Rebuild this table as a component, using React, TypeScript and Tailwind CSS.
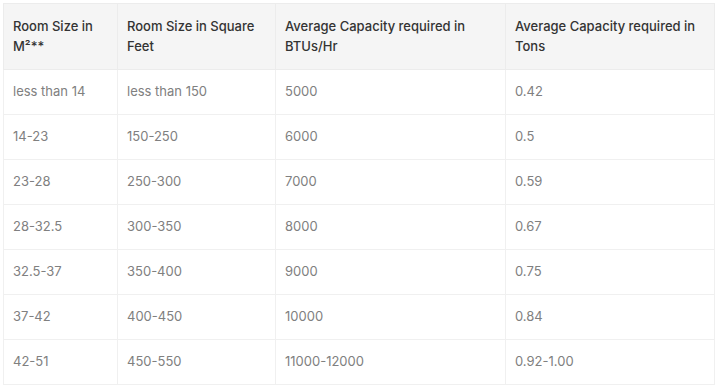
const headers = [
  "Room Size in M²**",
  "Room Size in Square Feet",
  "Average Capacity required in BTUs/Hr",
  "Average Capacity required in Tons",
];

const rows = [
  ["less than 14", "less than 150", "5000", "0.42"],
  ["14-23", "150-250", "6000", "0.5"],
  ["23-28", "250-300", "7000", "0.59"],
  ["28-32.5", "300-350", "8000", "0.67"],
  ["32.5-37", "350-400", "9000", "0.75"],
  ["37-42", "400-450", "10000", "0.84"],
  ["42-51", "450-550", "11000-12000", "0.92-1.00"],
];

const widths = ["w-[114px]", "w-[158px]", "w-[230px]", "w-[209px]"];

export default function App() {
  return (
    <div className="w-[720px] h-[387px] bg-white pl-[3px] pt-[3px] font-['Inter',sans-serif]">
      <table className="w-[711px] table-fixed border-collapse">
        <thead>
          <tr className="bg-[#f5f5f5] h-[65px]">
            {headers.map((h, i) => (
              <th
                key={h}
                className={`${widths[i]} border border-[#ececec] px-[9px] pt-[12px] pb-[13px] text-left align-top text-[13px] leading-[20px] font-medium text-[#333]`}
              >
                {h}
              </th>
            ))}
          </tr>
        </thead>
        <tbody>
          {rows.map((r) => (
            <tr key={r[0]} className="h-[45px]">
              {r.map((c, i) => (
                <td
                  key={i}
                  className={`${widths[i]} border border-[#f0f0f0] px-[9px] text-[13px] text-[#808080]`}
                >
                  {c}
                </td>
              ))}
            </tr>
          ))}
        </tbody>
      </table>
    </div>
  );
}
